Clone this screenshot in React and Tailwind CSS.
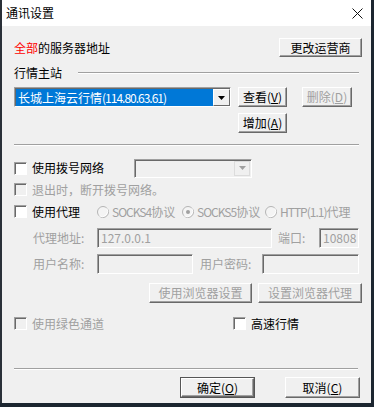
import React from "react";

const font = "font-['Noto_Sans_CJK_SC','Liberation_Sans',sans-serif]";

const Btn = ({ w, children, disabled, def }) => {
  const inner = (
    <div
      className={`${def ? "w-full" : w} h-full flex items-center justify-center bg-[#f0f0f0] border border-t-white border-l-white border-b-[#696969] border-r-[#696969] shadow-[inset_-1px_-1px_#a0a0a0] ${
        disabled ? "text-[#a0a0a0]" : "text-black"
      }`}
    >
      {children}
    </div>
  );
  if (def) {
    return <div className={`${w} h-full border border-[#555]`}>{inner}</div>;
  }
  return inner;
};

const Sunken = ({ className, children }) => (
  <div
    className={`border border-t-[#a0a0a0] border-l-[#a0a0a0] border-b-white border-r-white shadow-[inset_1px_1px_#696969] ${className}`}
  >
    {children}
  </div>
);

const Check = ({ disabled }) => (
  <Sunken className={`w-[13px] h-[13px] shrink-0 ${disabled ? "bg-[#f0f0f0]" : "bg-white"}`} />
);

const Radio = ({ checked }) => (
  <svg width="12" height="12" viewBox="0 0 12 12" className="shrink-0">
    <circle cx="6" cy="6" r="5.5" fill="#f4f4f4" stroke="#b4b4b4" />
    <path d="M2.2 9.8 A5.5 5.5 0 0 0 9.8 2.2" fill="none" stroke="#ffffff" />
    {checked && <circle cx="6" cy="6" r="2" fill="#a0a0a0" />}
  </svg>
);

const Arrow = ({ color }) => (
  <svg width="7" height="4" viewBox="0 0 7 4">
    <polygon points="0,0 7,0 3.5,4" fill={color} />
  </svg>
);

const Line = ({ w }) => <div className={`${w} h-[2px] border-t border-t-[#a0a0a0] border-b border-b-white`} />;

// mnemonic letter
const Key = ({ children }) => <span className="underline underline-offset-1">{children}</span>;

// SimSun-like narrow latin run
const Lat = ({ children }) => <span className="tracking-[-1px]">{children}</span>;

export default function App() {
  return (
    <div className={`w-[374px] h-[407px] bg-[#1c2630] ${font} text-[12px] leading-none text-black`}>
      <div className="w-[371px] h-[403px] bg-[#f0f0f0] border-l-2 border-l-[#2a3038] flex flex-col">
        <div className="h-[26px] bg-white flex items-center justify-between pl-[4px] pr-[8px]">
          <span>通讯设置</span>
          <svg width="11" height="11" viewBox="0 0 11 11">
            <path d="M0.5 0.5 L10.5 10.5 M10.5 0.5 L0.5 10.5" stroke="#111" strokeWidth="1" />
          </svg>
        </div>

        <div className="pl-[12px] flex flex-col">
          <div className="mt-[12px] h-[19px] flex items-center">
            <span>
              <span className="text-[#ff0000]">全部</span>的服务器地址
            </span>
            <div className="ml-auto mr-[9px] h-full">
              <Btn w="w-[83px]">更改运营商</Btn>
            </div>
          </div>

          <div className="mt-[9px] h-[14px] flex items-center">
            <span>行情主站</span>
            <div className="ml-[16px]">
              <Line w="w-[281px]" />
            </div>
          </div>

          <div className="mt-[7px] h-[20px] flex">
            <Sunken className="w-[217px] h-full bg-white pl-[1px] pt-[1px] flex">
              <div className="w-[197px] h-full bg-[#0078d7] text-white flex items-center pl-[2px]">
                长城上海云行情<Lat>(114.80.63.61)</Lat>
              </div>
              <div className="w-[17px] h-full flex items-center justify-center bg-[#f0f0f0] border border-t-white border-l-white border-b-[#696969] border-r-[#696969]">
                <Arrow color="#000" />
              </div>
            </Sunken>
            <div className="ml-[7px] h-full">
              <Btn w="w-[49px]">
                查看(<Key>V</Key>)
              </Btn>
            </div>
            <div className="ml-[15px] h-full">
              <Btn w="w-[50px]" disabled>
                删除(<Key>D</Key>)
              </Btn>
            </div>
          </div>

          <div className="mt-[6px] h-[20px] ml-[224px]">
            <Btn w="w-[49px]">
              增加(<Key>A</Key>)
            </Btn>
          </div>

          <div className="mt-[11px]">
            <Line w="w-[345px]" />
          </div>

          <div className="mt-[12px] h-[20px] flex items-center">
            <div className="w-[120px] flex items-center">
              <Check />
              <span className="ml-[5px]">使用拨号网络</span>
            </div>
            <Sunken className="w-[118px] h-[19px] bg-[#f0f0f0] flex justify-end pr-[1px] pt-[1px]">
              <div className="w-[16px] h-[15px] flex items-center justify-center border border-[#dcdcdc]">
                <Arrow color="#a0a0a0" />
              </div>
            </Sunken>
          </div>

          <div className="mt-[3px] h-[17px] flex items-center text-[#a0a0a0]">
            <Check disabled />
            <span className="ml-[5px]">退出时，断开拨号网络。</span>
          </div>

          <div className="mt-[5px] h-[17px] flex items-center">
            <div className="w-[83px] flex items-center">
              <Check />
              <span className="ml-[5px]">使用代理</span>
            </div>
            <div className="w-[85px] flex items-center text-[#a0a0a0]">
              <Radio />
              <span className="ml-[3px]">
                <Lat>SOCKS4</Lat>协议
              </span>
            </div>
            <div className="w-[83px] flex items-center text-[#a0a0a0]">
              <Radio checked />
              <span className="ml-[3px]">
                <Lat>SOCKS5</Lat>协议
              </span>
            </div>
            <div className="flex items-center text-[#a0a0a0]">
              <Radio />
              <span className="ml-[3px]">
                <Lat>HTTP(1.1)</Lat>代理
              </span>
            </div>
          </div>

          <div className="mt-[8px] h-[20px] flex items-center text-[#a0a0a0]">
            <span className="w-[83px] pl-[19px]">代理地址:</span>
            <Sunken className="w-[175px] h-full bg-[#f0f0f0] flex items-center pl-[3px]">
              127.0.0.1
            </Sunken>
            <span className="ml-[6px] w-[41px]">端口:</span>
            <Sunken className="w-[40px] h-full bg-[#f0f0f0] flex items-center pl-[3px]">
              10808
            </Sunken>
          </div>

          <div className="mt-[6px] h-[20px] flex items-center text-[#a0a0a0]">
            <span className="w-[83px] pl-[19px]">用户名称:</span>
            <Sunken className="w-[96px] h-full bg-[#f0f0f0]" />
            <span className="ml-[7px] w-[62px]">用户密码:</span>
            <Sunken className="w-[97px] h-full bg-[#f0f0f0]" />
          </div>

          <div className="mt-[9px] h-[20px] flex">
            <div className="ml-[135px] h-full">
              <Btn w="w-[103px]" disabled>
                使用浏览器设置
              </Btn>
            </div>
            <div className="ml-[6px] h-full">
              <Btn w="w-[104px]" disabled>
                设置浏览器代理
              </Btn>
            </div>
          </div>

          <div className="mt-[12px] h-[17px] flex items-center">
            <div className="w-[219px] flex items-center text-[#a0a0a0]">
              <Check disabled />
              <span className="ml-[5px]">使用绿色通道</span>
            </div>
            <Check />
            <span className="ml-[5px]">高速行情</span>
          </div>

          <div className="mt-[36px]">
            <Line w="w-[344px]" />
          </div>

          <div className="mt-[7px] h-[21px] flex">
            <div className="ml-[166px] h-full">
              <Btn w="w-[75px]" def>
                确定(<Key>O</Key>)
              </Btn>
            </div>
            <div className="ml-[30px] h-full">
              <Btn w="w-[75px]">
                取消(<Key>C</Key>)
              </Btn>
            </div>
          </div>
        </div>
      </div>
    </div>
  );
}
